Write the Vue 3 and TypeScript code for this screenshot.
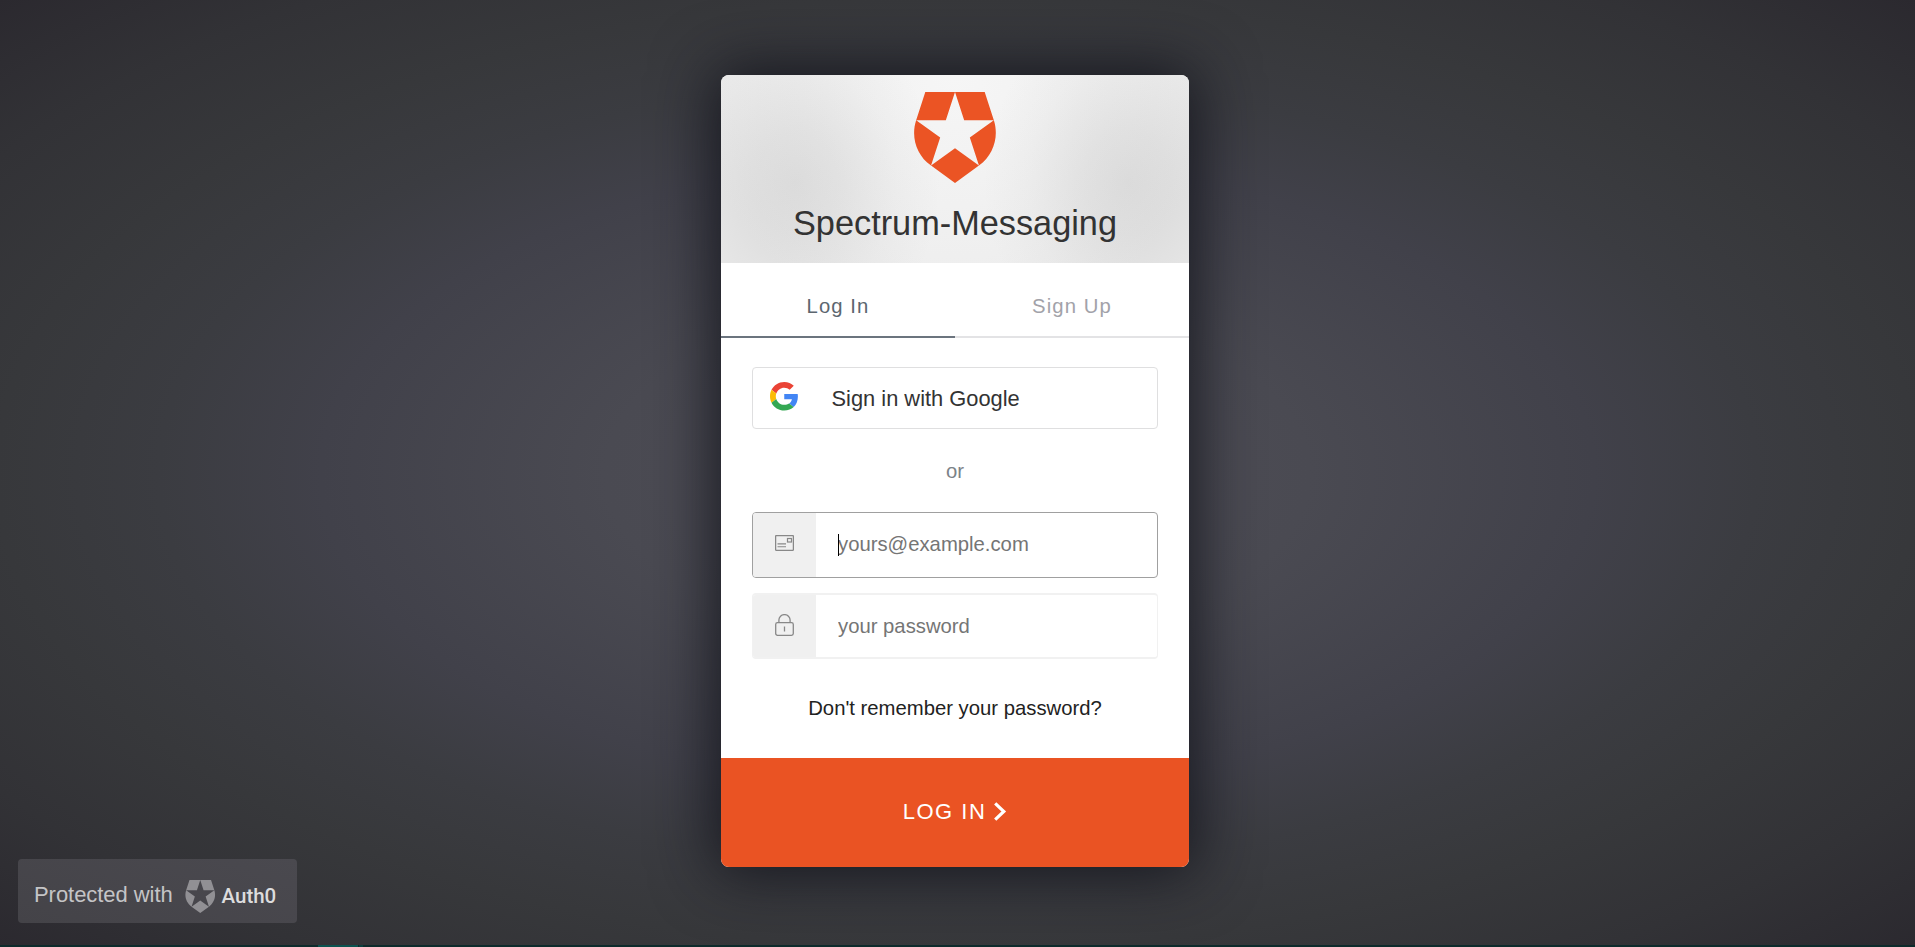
<script setup lang="ts">
import { ref } from 'vue'

const tabs = ['Log In', 'Sign Up']
const activeTab = ref(0)
const email = ref('')
const password = ref('')
</script>

<template>
  <main class="page">
    <form class="card" @submit.prevent>
      <header class="head">
        <svg class="logo" viewBox="0 0 152.26 168" preserveAspectRatio="none" fill="#eb5424">
          <path d="M119.555 135.861L103 83.99l43.56-31.96h-53.83L76.13 0h53.84l16.59 52.03c9.62 30.68-.58 64.16-27.005 83.831zM32.707 135.861L76.13 168l43.424-32.139-43.424-31.96zM5.7 52.03c-10.15 31.68 1.136 64.92 27.007 83.831L49.26 83.99 5.7 52.03h53.83L76.13 0H22.29z" />
        </svg>
        <h1 class="title">Spectrum-Messaging</h1>
      </header>

      <nav class="tabs">
        <button
          v-for="(tab, i) in tabs"
          :key="tab"
          type="button"
          class="tab"
          :class="{ active: i === activeTab }"
          @click="activeTab = i"
        >{{ tab }}</button>
      </nav>

      <section class="body">
        <button type="button" class="google">
          <svg class="g" viewBox="0 0 48 48">
            <path fill="#ea4335" d="M24 9.5c3.54 0 6.71 1.22 9.21 3.6l6.85-6.85C35.9 2.38 30.47 0 24 0 14.62 0 6.51 5.38 2.56 13.22l7.98 6.19C12.43 13.72 17.74 9.5 24 9.5z" />
            <path fill="#4285f4" d="M46.98 24.55c0-1.57-.15-3.09-.38-4.55H24v9.02h12.94c-.58 2.96-2.26 5.48-4.78 7.18l7.73 6c4.51-4.18 7.09-10.36 7.09-17.65z" />
            <path fill="#fbbc05" d="M10.53 28.59c-.48-1.45-.76-2.99-.76-4.59s.27-3.14.76-4.59l-7.98-6.19C.92 16.46 0 20.12 0 24c0 3.88.92 7.54 2.56 10.78l7.97-6.19z" />
            <path fill="#34a853" d="M24 48c6.48 0 11.93-2.13 15.89-5.81l-7.73-6c-2.15 1.45-4.92 2.3-8.16 2.3-6.26 0-11.57-4.22-13.47-9.91l-7.98 6.19C6.51 42.62 14.62 48 24 48z" />
          </svg>
          <span class="google-text">Sign in with Google</span>
        </button>

        <p class="or">or</p>

        <label class="field focused">
          <span class="badge">
            <svg class="mail" viewBox="0 0 19 16" fill="none" stroke="#888">
              <rect x=".6" y=".6" width="17.8" height="14.8" rx=".8" stroke-width="1.3" />
              <rect x="12.5" y="3.5" width="4" height="3.5" stroke-width="1.2" />
              <path d="M2.5 8.9h8.5M2.5 11.7h8.5" stroke-width="1.1" />
            </svg>
          </span>
          <span class="entry">
            <i class="caret"></i>
            <input v-model="email" type="email" placeholder="yours@example.com" />
          </span>
        </label>

        <label class="field">
          <span class="badge">
            <svg class="lock" viewBox="0 0 19 22" fill="none" stroke="#888" stroke-width="1.3">
              <rect x=".7" y="8.7" width="17.6" height="12.6" rx="1.8" />
              <path d="M3.9 8.5V6a5.6 5.4 0 0 1 11.2 0v2.5M9.5 12.6v5" />
            </svg>
          </span>
          <span class="entry">
            <input v-model="password" type="password" placeholder="your password" />
          </span>
        </label>

        <a class="forgot">Don't remember your password?</a>
      </section>

      <button type="submit" class="submit">
        <span>LOG IN</span>
        <svg class="chevron" viewBox="0 0 13 19" fill="none" stroke="#fff" stroke-width="3.2">
          <path d="M1.2 1.3l8.6 8.2-8.6 8.2" />
        </svg>
      </button>
    </form>

    <aside class="protected">
      <span class="with">Protected with</span>
      <svg class="shield" viewBox="0 0 152.26 168" preserveAspectRatio="none" fill="#919094">
        <path d="M119.555 135.861L103 83.99l43.56-31.96h-53.83L76.13 0h53.84l16.59 52.03c9.62 30.68-.58 64.16-27.005 83.831zM32.707 135.861L76.13 168l43.424-32.139-43.424-31.96zM5.7 52.03c-10.15 31.68 1.136 64.92 27.007 83.831L49.26 83.99 5.7 52.03h53.83L76.13 0H22.29z" />
      </svg>
      <span class="brand">Auth0</span>
    </aside>

    <footer class="strip"><i class="mark"></i><i class="tick"></i></footer>
  </main>
</template>

<style>
body {
  margin: 0;
  overflow: hidden;
}
</style>

<style scoped>
.page {
  position: relative;
  box-sizing: border-box;
  width: 100vw;
  height: 100vh;
  padding-top: 75px;
  display: flex;
  align-items: flex-start;
  justify-content: center;
  padding-right: 5px;
  background: radial-gradient(ellipse farthest-corner at 50% 50%, #504f58 0%, #4a4a52 26%, #41414a 47%, #3b3c41 59%, #37383b 71%, #323236 85%, #2b292f 100%);
  font-family: "Liberation Sans", Arial, sans-serif;
}
button {
  font: inherit;
  border: 0;
  padding: 0;
  background: none;
}
.card {
  display: flex;
  flex-direction: column;
  width: 468px;
  height: 792px;
  border-radius: 8px;
  overflow: hidden;
  background: #fff;
  box-shadow: 0 0 62px 6px rgba(17, 18, 26, 0.92);
}
.head {
  box-sizing: border-box;
  height: 188px;
  padding-top: 17px;
  display: flex;
  flex-direction: column;
  align-items: center;
  background:
    radial-gradient(ellipse 145px 170px at 16% 57%, rgba(120, 120, 120, 0.16), rgba(120, 120, 120, 0.12) 30%, rgba(120, 120, 120, 0.04) 70%, transparent),
    radial-gradient(ellipse 145px 170px at 87% 57%, rgba(120, 120, 120, 0.16), rgba(120, 120, 120, 0.12) 30%, rgba(120, 120, 120, 0.04) 70%, transparent),
    radial-gradient(ellipse 260px 260px at 50% 0, #f6f6f6, #efefef 70%, #ebebeb);
}
.logo {
  width: 84px;
  height: 91px;
}
.title {
  margin: 19px 0 0;
  font-size: 34.3px;
  line-height: 42px;
  font-weight: 400;
  color: #333;
}
.tabs {
  display: flex;
  height: 75px;
}
.tab {
  flex: 1;
  box-sizing: border-box;
  height: 75px;
  padding-top: 14px;
  border-bottom: 2px solid #e3e3e5;
  font-size: 20.3px;
  letter-spacing: 1.1px;
  color: #a2a2a9;
}
.tab.active {
  color: #5c666f;
  border-bottom-color: #6b747e;
}
.body {
  display: flex;
  flex-direction: column;
  padding: 29px 31px 0;
  height: 420px;
  box-sizing: border-box;
}
.google {
  display: flex;
  align-items: center;
  box-sizing: border-box;
  height: 62px;
  padding-left: 17px;
  border: 1px solid #dfdfe0;
  border-radius: 4px;
  font-size: 21.85px;
  color: #333;
}
.g {
  width: 28.5px;
  height: 28.5px;
  margin-top: -3px;
}
.google-text {
  margin: 2px 0 0 33px;
}
.or {
  margin: 31px 0 30px;
  line-height: 22px;
  font-size: 20.3px;
  text-align: center;
  color: #7b8288;
}
.field {
  display: flex;
  box-sizing: border-box;
  height: 66px;
  flex: none;
  margin-bottom: 15px;
  border: 1px solid #f1f1f1;
  border-width: 2px 1px;
  border-radius: 4px;
  overflow: hidden;
}
.field.focused {
  border: 1px solid #a0a0a0;
}
.badge {
  display: flex;
  align-items: center;
  justify-content: center;
  width: 63px;
  background: #f0f0f0;
}
.mail {
  width: 19px;
  height: 16px;
  margin-bottom: 4px;
}
.lock {
  width: 19px;
  height: 22px;
  margin-bottom: 3px;
}
.entry {
  flex: 1;
  display: flex;
  align-items: center;
  position: relative;
  padding-left: 22px;
}
.entry input {
  width: 100%;
  padding: 0;
  border: 0;
  outline: 0;
  font: 20.3px "Liberation Sans", Arial, sans-serif;
  color: #333;
}
.focused input {
  margin-bottom: 2px;
}
.entry input::placeholder {
  color: #757575;
  opacity: 1;
}
.caret {
  position: absolute;
  left: 22px;
  top: 21px;
  width: 1px;
  height: 22px;
  background: #000;
}
.forgot {
  margin-top: 23px;
  font-size: 20.3px;
  line-height: 22px;
  text-align: center;
  color: #222;
}
.submit {
  display: flex;
  align-items: center;
  justify-content: center;
  gap: 8px;
  height: 109px;
  padding-bottom: 2px;
  background: #ea5323;
  color: #fff;
  font-size: 22px;
  letter-spacing: 1.5px;
}
.chevron {
  width: 13px;
  height: 19px;
  margin-bottom: 1px;
}
.protected {
  position: absolute;
  left: 18px;
  bottom: 24px;
  box-sizing: border-box;
  width: 279px;
  height: 64px;
  padding-left: 16px;
  display: flex;
  align-items: center;
  border-radius: 4px;
  background: linear-gradient(20deg, #444348, #4a494f);
}
.with {
  margin-top: 8px;
  width: 151px;
  font-size: 22px;
  letter-spacing: -0.05px;
  color: #c4c4c6;
}
.shield {
  width: 30.5px;
  height: 33px;
  margin-top: 10px;
}
.brand {
  margin: 10px 0 0 6px;
  font: 500 20.5px Roboto, "Noto Sans", sans-serif;
  color: #dcdcdd;
}
.strip {
  position: absolute;
  left: 0;
  right: 0;
  bottom: 0;
  height: 2px;
  display: flex;
  gap: 1px;
  padding-left: 318px;
  background: #0d2a2b;
}
.mark {
  width: 40px;
  background: #0b524f;
}
.tick {
  width: 4px;
  background: #0a3f3e;
}
</style>
